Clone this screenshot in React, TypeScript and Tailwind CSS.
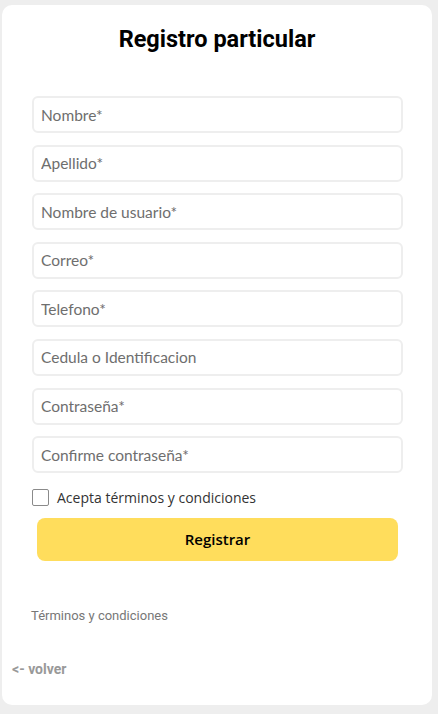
import React from 'react'

const fields = [
    'Nombre*',
    'Apellido*',
    'Nombre de usuario*',
    'Correo*',
    'Telefono*',
    'Cedula o Identificacion',
    'Contraseña*',
    'Confirme contraseña*',
]

const App = () => {
    return (
        <div className="min-h-[714px] bg-[#eeeeee] pt-[5px] pl-[2px]">
            <div className="w-[430px] h-[700px] bg-white rounded-[10px] flex flex-col">
                <h1 className="mt-[20px] text-center text-[23.5px] leading-[28px] font-bold text-black font-['Roboto',sans-serif]">
                    Registro particular
                </h1>
                <form className="mt-[43px] pl-[30px] pr-[29px] flex flex-col">
                    <div className="flex flex-col gap-[11.6px]">
                        {fields.map((f) => (
                            <input
                                key={f}
                                placeholder={f}
                                className="h-[37px] w-full rounded-[6px] border-2 border-[#eeeeee] px-[7px] text-[15.5px] font-['Lato',sans-serif] text-[#333] placeholder:text-[#6e6e6e] outline-none"
                            />
                        ))}
                    </div>
                    <label className="mt-[14px] flex items-center gap-[8px] font-['Open_Sans',sans-serif] text-[14px] text-[#333]">
                        <span className="w-[17px] h-[17px] border border-[#8a8a8a] rounded-[2px] bg-white" />
                        Acepta términos y condiciones
                    </label>
                    <button
                        type="button"
                        className="mt-[10px] mx-[5px] h-[43px] rounded-[8px] bg-[#ffdd5c] text-[15px] font-semibold text-black font-['Open_Sans',sans-serif]"
                    >
                        Registrar
                    </button>
                </form>
                <p className="mt-[45px] pl-[29px] text-[13px] text-[#777] font-['Roboto',sans-serif]">
                    Términos y condiciones
                </p>
                <p className="mt-[33px] pl-[10px] text-[14px] font-bold text-[#999] font-['Roboto',sans-serif]">
                    &lt;- volver
                </p>
            </div>
        </div>
    )
}

export default App
